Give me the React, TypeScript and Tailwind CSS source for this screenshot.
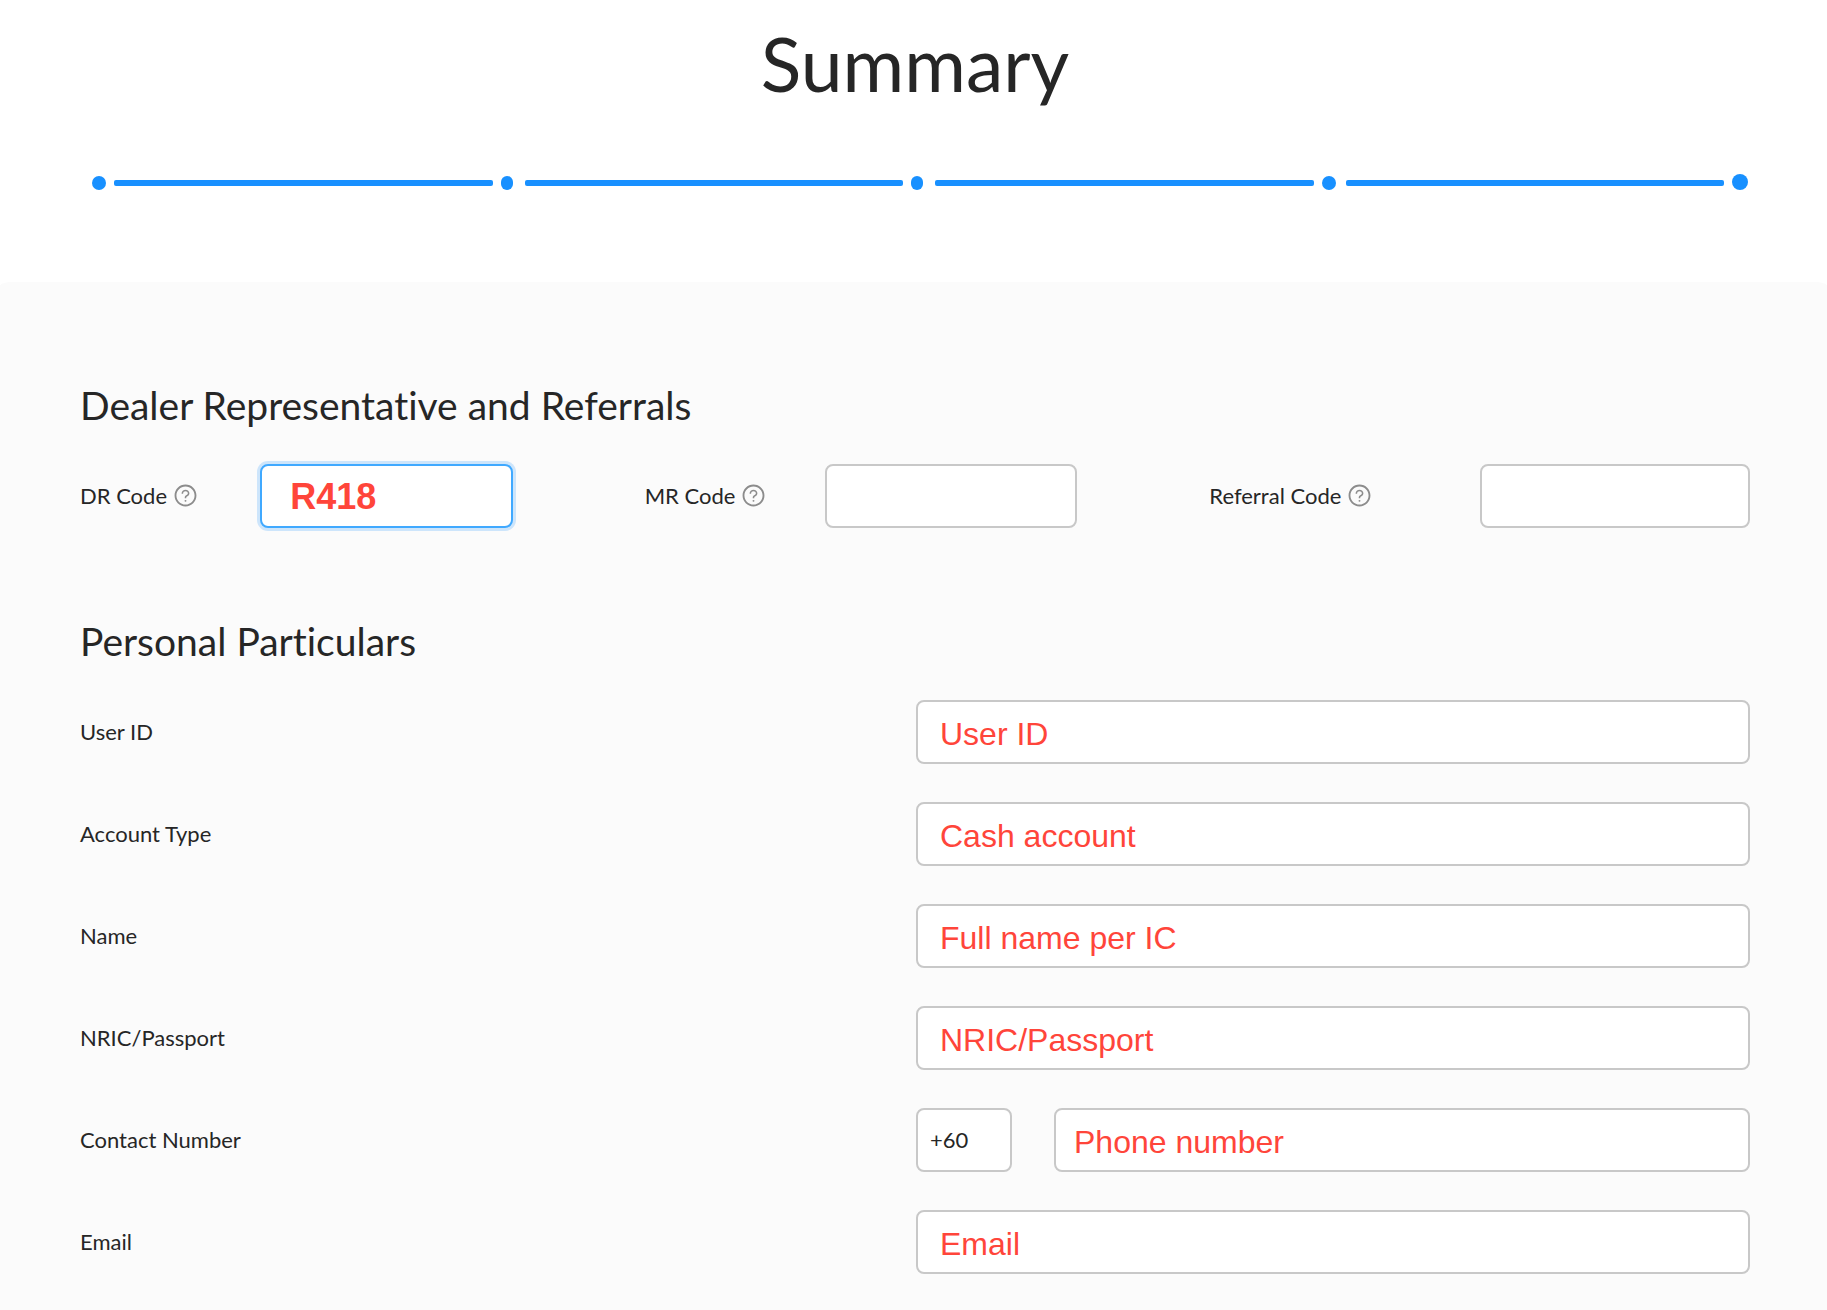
import { Fragment, useState } from 'react';
import clsx from 'clsx';
import { AiOutlineQuestionCircle } from 'react-icons/ai';

const steps = [
  'w-3.5 h-3.5 mr-2',
  'w-3 h-3.5 ml-2 mr-3',
  'w-3 h-3.5 ml-2 mr-3',
  'w-3.5 h-3.5 ml-2 mr-2.5',
  'w-4 h-4 ml-2',
];

const codes = [
  { id: 'dr-code', label: 'DR Code', value: 'R418', cols: 'grid-cols-[5fr_7fr_3fr]', active: true },
  { id: 'mr-code', label: 'MR Code', value: '', cols: 'grid-cols-[5fr_7fr_3fr]', active: false },
  { id: 'referral-code', label: 'Referral Code', value: '', cols: 'grid-cols-2', active: false },
];

const particulars = [
  { id: 'user-id', label: 'User ID', value: 'User ID' },
  { id: 'account-type', label: 'Account Type', value: 'Cash account' },
  { id: 'name', label: 'Name', value: 'Full name per IC' },
  { id: 'nric', label: 'NRIC/Passport', value: 'NRIC/Passport' },
  { id: 'contact', label: 'Contact Number', value: 'Phone number', prefix: '+60' },
  { id: 'email', label: 'Email', value: 'Email' },
];

function TextField({ id, initial, label, className }: { id: string; initial: string; label?: string; className?: string }) {
  const [value, setValue] = useState(initial);

  return (
    <input
      id={id}
      type="text"
      aria-label={label}
      value={value}
      onChange={(e) => setValue(e.target.value)}
      className={clsx('h-16 min-w-0 rounded-lg border-2 bg-white outline-none', className)}
    />
  );
}

function Progress() {
  return (
    <div className="flex items-end pl-3 pr-0.5 h-4">
      {steps.map((dot, i) => (
        <Fragment key={i}>
          {i > 0 && <div className="flex-1 h-1.5 mb-1 rounded-xs bg-[#1890ff]" />}
          <div className={clsx('shrink-0 rounded-full bg-[#1890ff]', dot)} />
        </Fragment>
      ))}
    </div>
  );
}

export default function App() {
  return (
    <div className="min-h-screen bg-white text-[#262626] text-[22px] font-['Lato',sans-serif] [font-variant-ligatures:none]">
      <header className="pl-20 pr-[77px] pt-[15px] pb-[92px]">
        <h1 className="mb-[63px] text-center text-[75px] leading-[96px]">Summary</h1>
        <Progress />
      </header>

      <main className="min-h-[1028px] rounded-t-[12px_4px] bg-[#fbfbfb] pl-20 pr-[77px] pt-24 pb-9">
        <section className="mb-[86px]">
          <h2 className="mb-8 text-[39px] leading-[54px]">Dealer Representative and Referrals</h2>
          <div className="grid grid-cols-3 gap-6">
            {codes.map((code) => (
              <div key={code.id} className={clsx('grid items-center', code.cols)}>
                <label htmlFor={code.id} className="flex items-center gap-1.5 pb-0.5 whitespace-nowrap">
                  {code.label}
                  <AiOutlineQuestionCircle size={25} className="text-[#8c8c8c]" />
                </label>
                <TextField
                  id={code.id}
                  initial={code.value}
                  className={clsx(
                    "w-full px-7 pt-0.5 font-['Liberation_Sans',Arial,sans-serif] text-4xl font-bold text-[#ff453a]",
                    code.active ? 'border-[#40a9ff] ring-3 ring-[#1890ff]/20' : 'border-[#c8c8c8]'
                  )}
                />
              </div>
            ))}
          </div>
        </section>

        <section>
          <h2 className="mb-8 text-[39px] leading-[54px]">Personal Particulars</h2>
          <div className="flex flex-col gap-[38px]">
            {particulars.map((field) => (
              <div key={field.id} className="grid grid-cols-2 gap-0.5 items-center">
                <label htmlFor={field.id} className="pb-0.5">{field.label}</label>
                <div className="flex gap-[42px]">
                  {field.prefix && (
                    <TextField id="country-code" label="Country code" initial={field.prefix} className="w-24 px-3 pb-0.5 border-[#c8c8c8]" />
                  )}
                  <TextField
                    id={field.id}
                    initial={field.value}
                    className={clsx(
                      "flex-1 pt-1 border-[#c8c8c8] font-['Liberation_Sans',Arial,sans-serif] text-[32px] text-[#ff453a]",
                      field.prefix ? 'px-[18px]' : 'px-[22px]'
                    )}
                  />
                </div>
              </div>
            ))}
          </div>
        </section>
      </main>
    </div>
  );
}
